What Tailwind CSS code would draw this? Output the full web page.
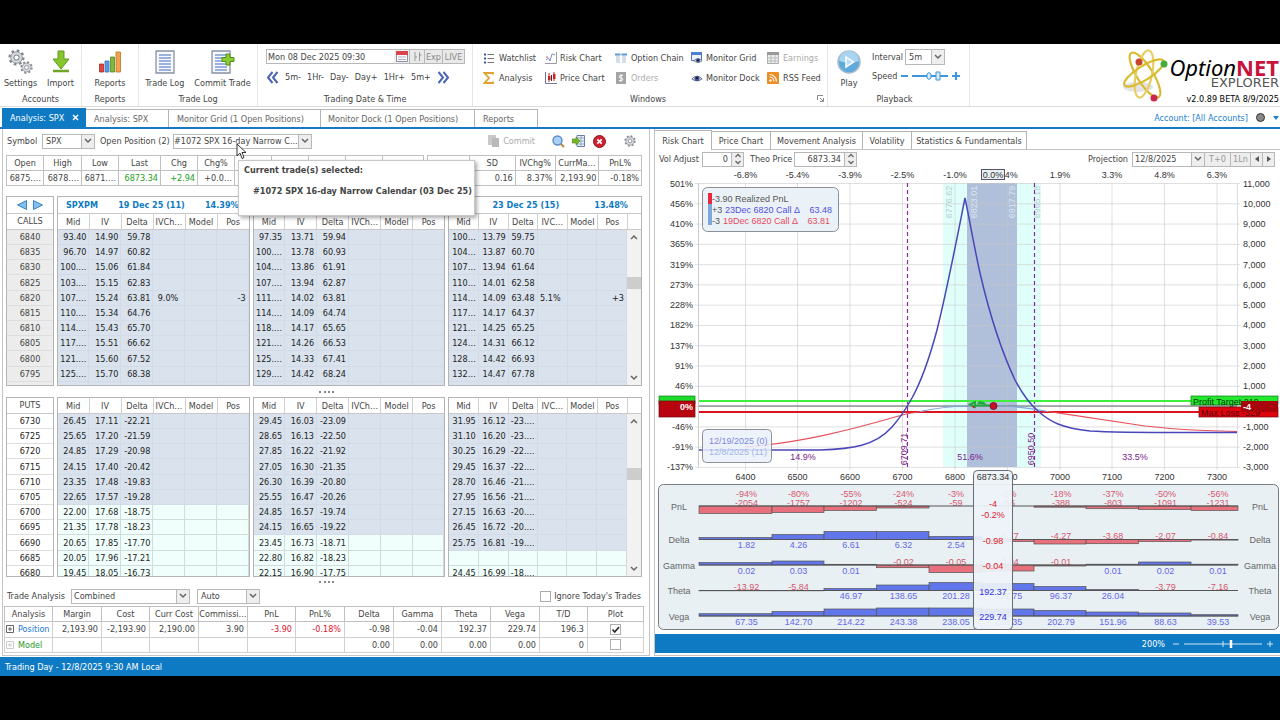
<!DOCTYPE html>
<html lang="en">
<head>
  <meta charset="utf-8"/>
  <meta content="width=device-width, initial-scale=1" name="viewport"/>
  <title>OptionNET Explorer</title>
  <script src="https://cdn.jsdelivr.net/npm/@tailwindcss/browser@4"></script>
</head>
<body class="bg-black h-screen overflow-hidden flex flex-col pt-[44px] pb-[44px] font-['DejaVu_Sans_Condensed','DejaVu_Sans',sans-serif] text-[9px] leading-[12px] text-[#444]">

  <!-- Shared symbols -->
  <svg class="hidden">
    <symbol id="chev" viewBox="0 0 8 6"><path d="M1 1l3 3 3-3" fill="none" stroke="#666" stroke-width="1.5"/></symbol>
    <symbol id="spin" viewBox="0 0 8 12"><path d="M1.500 4l2.500-2.500L6.500 4M1.500 8L4 10.500 6.500 8" fill="none" stroke="#666" stroke-width="1.300"/></symbol>
    <symbol id="gear" viewBox="0 0 20 20">
      <circle cx="10" cy="10" r="8" fill="none" stroke="#85898f" stroke-width="3" stroke-dasharray="3.100 3.180"/>
      <circle cx="10" cy="10" r="6.800" fill="#d5d8dc" stroke="#85898f"/>
      <circle cx="10" cy="10" r="3" fill="#fff" stroke="#85898f" stroke-width="1.200"/>
    </symbol>
    <symbol id="doc" viewBox="0 0 20 24">
      <path d="M1 1h18v22H1z" fill="#f7f9fd" stroke="#8791a3" stroke-width="1.300"/>
      <path d="M4 5h12M4 8h12M4 11h12M4 14h12M4 17h12M4 20h12" stroke="#7d9bd4" stroke-width="1.500"/>
    </symbol>
    <symbol id="eye" viewBox="0 0 14 10">
      <path d="M1 5.500Q7-1 13 5.500Q7 10 1 5.500z" fill="#dfe3ec" stroke="#555d75"/>
      <circle cx="7" cy="5" r="3" fill="#3f5596"/><circle cx="7" cy="4.500" r="1.200" fill="#111"/>
    </symbol>
    <radialGradient id="nucleus" cx=".4" cy=".3" r=".7"><stop offset="0" stop-color="#a9c8ee"/><stop offset="1" stop-color="#2f62ab"/></radialGradient>
  </svg>

  <div class="flex-1 min-h-0 bg-white flex flex-col relative">

    <!-- Ribbon -->
    <header class="h-[63px] shrink-0 flex border-b border-[#dcdcdc]">
      <section class="w-[82px] flex flex-col items-center border-r border-[#e6e6e6]">
        <div class="h-[49px] flex gap-2 pt-[5px]">
          <button class="flex flex-col items-center w-[32px] whitespace-nowrap">
            <svg class="w-[26px] h-[26px]" viewBox="0 0 26 26"><use href="#gear" x="0" y="0" width="17" height="17"/><use href="#gear" x="12" y="12" width="13" height="13"/></svg>
            <span class="mt-[2px]">Settings</span>
          </button>
          <button class="flex flex-col items-center w-[32px] whitespace-nowrap">
            <svg class="w-[20px] h-[26px]" viewBox="0 0 20 26"><path d="M7 2h6v8h5l-8 10-8-10h5z" fill="#86c52b" stroke="#5f9a1b"/><path d="M2 22h16" stroke="#6fa526" stroke-width="2.500"/></svg>
            <span class="mt-[2px]">Import</span>
          </button>
        </div>
        <span>Accounts</span>
      </section>
      <section class="w-[57px] flex flex-col items-center border-r border-[#e6e6e6]">
        <div class="h-[49px] pt-[5px]">
          <button class="flex flex-col items-center">
            <svg class="w-[24px] h-[26px]" viewBox="0 0 24 26"><g stroke-width=".8"><path d="M1.500 15h4v8h-4z" fill="#e4453b" stroke="#a52c25"/><path d="M7 12h4v11H7z" fill="#5f9be0" stroke="#3b6fae"/><path d="M12.500 8h4v15h-4z" fill="#7cba3c" stroke="#52862a"/><path d="M18 3h4.500v20H18z" fill="#f3a24b" stroke="#bb7222"/></g></svg>
            <span class="mt-[2px]">Reports</span>
          </button>
        </div>
        <span>Reports</span>
      </section>
      <section class="w-[119px] flex flex-col items-center border-r border-[#e6e6e6]">
        <div class="h-[49px] flex gap-[10px] pt-[5px]">
          <button class="flex flex-col items-center">
            <svg class="w-[20px] h-[26px]"><use href="#doc" y="1" width="20" height="24"/></svg>
            <span class="mt-[2px]">Trade Log</span>
          </button>
          <button class="flex flex-col items-center">
            <svg class="w-[26px] h-[26px]" viewBox="0 0 26 26"><use href="#doc" x="1" y="1" width="20" height="24"/><path d="M16 5h4v3.500h4v4h-4V16h-4v-3.500h-4v-4h4z" fill="#8ccc33" stroke="#4f8f1c"/></svg>
            <span class="mt-[2px]">Commit Trade</span>
          </button>
        </div>
        <span>Trade Log</span>
      </section>
      <section class="w-[215px] flex flex-col border-r border-[#e6e6e6] pl-2">
        <div class="h-[49px] pt-[5px]">
          <div class="flex w-[199px] h-[15px] border border-[#b8b8b8]">
            <input aria-label="Trading date" class="flex-1 min-w-0 pl-px" value="Mon 08 Dec 2025 09:30"/>
            <button aria-label="Calendar" class="w-[15px] flex items-center justify-center bg-[#eee]"><svg class="w-[12px] h-[11px]" viewBox="0 0 12 11"><path d="M.5.5h11v10H.5z" fill="#fff" stroke="#8a8fa8"/><path d="M0 0h12v4H0z" fill="#d9434b"/><path d="M2 6h8M2 8.500h8" stroke="#aab"/></svg></button>
            <button aria-label="Step" class="w-[15px] border-l border-[#b8b8b8] bg-[#e9e9e9] flex items-center justify-center"><svg class="w-[9px] h-[9px]" viewBox="0 0 9 9"><path d="M2 0v9M6.500 0v9M2 5h2M6.500 3h2" stroke="#999" fill="none"/></svg></button>
            <button class="w-[18px] border-l border-[#b8b8b8] bg-[#e9e9e9] text-[#888]">Exp</button>
            <button class="w-[22px] border-l border-[#b8b8b8] bg-[#e9e9e9] text-[#888]">LIVE</button>
          </div>
          <div class="flex items-center justify-between w-[184px] mt-[6px] h-[14px]">
            <button aria-label="Back"><svg class="w-[13px] h-[13px]" viewBox="0 0 13 13"><path d="M6.500 1L2 6.500 6.500 12M11.500 1L7 6.500l4.500 5.500" fill="none" stroke="#4a66b4" stroke-width="2"/></svg></button>
            <button>5m-</button><button>1Hr-</button><button>Day-</button><button>Day+</button><button>1Hr+</button><button>5m+</button>
            <button aria-label="Forward"><svg class="w-[13px] h-[13px]" viewBox="0 0 13 13"><path d="M1.500 1L6 6.500 1.500 12M6.500 1L11 6.500 6.500 12" fill="none" stroke="#4a66b4" stroke-width="2"/></svg></button>
          </div>
        </div>
        <span class="text-center pr-[8px]">Trading Date &amp; Time</span>
      </section>
      <section class="w-[355px] flex flex-col border-r border-[#e6e6e6] pl-[10px] relative">
        <div class="h-[49px] pt-[4px] grid grid-cols-[62px_70px_76px_76px_1fr] grid-rows-[20px_20px] whitespace-nowrap">
          <button class="flex items-center gap-1"><svg class="w-[12px] h-[11px]" viewBox="0 0 12 11"><path d="M1 1.500h2M1 5.500h2M1 9.500h2" stroke="#3a56a8" stroke-width="1.800"/><path d="M4.500 1.500H11M4.500 5.500H11M4.500 9.500H11" stroke="#777"/></svg>Watchlist</button>
          <button class="flex items-center gap-[3px]"><svg class="w-[12px] h-[12px]" viewBox="0 0 12 12"><path d="M11.500 0v11.500H0" fill="none" stroke="#99a"/><path d="M1 8l2.500-2L5 9l2-7 3 1" fill="none" stroke="#7a8fc4"/><path d="M1 5h2" stroke="#d55"/></svg>Risk Chart</button>
          <button class="flex items-center gap-1"><svg class="w-[12px] h-[11px]" viewBox="0 0 12 11"><path d="M0 1.500h5.500M6.500 1.500H12" stroke="#5c9bd8" stroke-width="2"/><path d="M2 2v8M4 2v8M8 2v8M10 2v8" stroke="#a8bdd4"/></svg>Option Chain</button>
          <button class="flex items-center gap-[3px]"><svg class="w-[12px] h-[12px]" viewBox="0 0 12 12"><path d="M.5.500h10v8H.5z" fill="#e9f0fb" stroke="#4d72bd"/><path d="M0 0h11v3H0z" fill="#4d7fd0"/><use href="#eye" x="2" y="5" width="10" height="7"/></svg>Monitor Grid</button>
          <button class="flex items-center gap-1 text-[#aaa]" disabled><svg class="w-[12px] h-[12px]" viewBox="0 0 12 12"><path d="M.5.500h11v11H.5z" fill="#eee" stroke="#aaa"/><path d="M0 0h12v3H0z" fill="#999"/><path d="M0 6h12M0 9h12M4 3v9M8 3v9" stroke="#bbb"/></svg>Earnings</button>
          <button class="flex items-center gap-1"><svg class="w-[12px] h-[12px]" viewBox="0 0 12 12"><path d="M10 2.500V1H1.500L6 6l-4.500 5H10V9.500" fill="none" stroke="#e2a02c" stroke-width="1.800"/></svg>Analysis</button>
          <button class="flex items-center gap-[3px]"><svg class="w-[12px] h-[12px]" viewBox="0 0 12 12"><path d="M.5 0v11.500H12" fill="none" stroke="#779"/><path d="M4 1v9M9 0v9" stroke="#c22"/><path d="M3 4h2.500v4H3z" fill="#c22"/><path d="M8 2h2.500v5H8z" fill="#c22"/><path d="M6.500 3v6" stroke="#334"/></svg>Price Chart</button>
          <button class="flex items-center gap-1 text-[#aaa]" disabled><svg class="w-[12px] h-[12px]" viewBox="0 0 12 12"><path d="M1 0h10v12H1z" fill="#a4a4a4"/><path d="M8 3.500H5.500a1.200 1.200 0 000 2.500h1a1.200 1.200 0 010 2.500H4M6 2v8" fill="none" stroke="#fff"/></svg>Orders</button>
          <button class="flex items-center gap-[3px]"><svg class="w-[12px] h-[9px]"><use href="#eye" width="12" height="9"/></svg>Monitor Dock</button>
          <button class="flex items-center gap-1"><svg class="w-[12px] h-[12px]" viewBox="0 0 12 12"><rect width="12" height="12" rx="1" fill="#ee8d22"/><circle cx="3.500" cy="8.500" r="1.200" fill="#fff"/><path d="M2.500 5a4.500 4.500 0 014.500 4.500M2.500 2.500a7 7 0 017 7" fill="none" stroke="#fff" stroke-width="1.200"/></svg>RSS Feed</button>
        </div>
        <span class="text-center pr-[14px]">Windows</span>
        <svg class="absolute right-[3px] bottom-[4px] w-[7px] h-[7px]" viewBox="0 0 7 7"><path d="M.5 5V.5H6M3 3l3 3M6.500 3v3.500H3" fill="none" stroke="#888"/></svg>
      </section>
      <section class="w-[142px] flex flex-col border-r border-[#e6e6e6] pl-[9px]">
        <div class="h-[49px] flex gap-[11px] pt-[5px]">
          <button class="flex flex-col items-center">
            <svg class="w-[24px] h-[26px]" viewBox="0 0 24 26"><circle cx="12" cy="13" r="11" fill="#5fa9dc" stroke="#a9bccb" stroke-width="1.500"/><path d="M2 12a10 10 0 0120 0q-10 3-20 0z" fill="#a9d5f2"/><path d="M9 8l7.500 5L9 18z" fill="#b8def8" stroke="#fff" stroke-width="1.500"/></svg>
            <span class="mt-[2px]">Play</span>
          </button>
          <div class="flex flex-col">
            <div class="flex items-center gap-[2px] h-[16px]">
              <label for="interval">Interval</label>
              <span class="flex w-[40px] h-[16px] border border-[#b8b8b8]"><select id="interval" class="appearance-none flex-1 min-w-0 pl-[3px]"><option>5m</option></select><span class="w-[13px] bg-[#eee] border-l border-[#b8b8b8] flex items-center justify-center"><svg class="w-[8px] h-[6px]"><use href="#chev"/></svg></span></span>
            </div>
            <div class="flex items-center gap-[3px] mt-[4px] h-[14px]">
              <span>Speed</span>
              <svg class="w-[60px] h-[12px]" viewBox="0 0 60 12"><path d="M1 6h7M12 6h36M52 6h8M56 2v8" stroke="#3d97dd" stroke-width="2"/><path d="M29 2.500l2 1.500v4l-2 1.500-2-1.500V4zM36 2h4v8h-4z" fill="#d8ecfb" stroke="#3d97dd"/></svg>
            </div>
          </div>
        </div>
        <span class="text-center pr-[17px]">Playback</span>
      </section>
      <div class="flex-1 flex justify-end">
        <svg class="w-[48px] h-[54px] mt-[4px]" viewBox="0 0 48 54">
          <ellipse cx="17" cy="39" rx="15" ry="5" fill="#e3e3e6"/>
          <g fill="none" stroke="#d9bb32" stroke-width="2.200">
            <ellipse cx="24" cy="27" rx="8" ry="26" transform="rotate(-32 24 27)"/>
            <ellipse cx="23" cy="26" rx="8" ry="24" transform="rotate(12 23 26)" stroke="#e6cf62"/>
            <ellipse cx="23" cy="25" rx="7" ry="23" transform="rotate(58 23 25)"/>
          </g>
          <circle cx="23" cy="27" r="8.500" fill="url(#nucleus)"/>
          <circle cx="18" cy="14" r="3.500" fill="#c8452c"/><circle cx="43" cy="16" r="3.500" fill="#45ad3d"/><circle cx="33" cy="50" r="3.500" fill="#c82850"/>
        </svg>
        <div class="flex flex-col items-end text-black pr-px">
          <div class="font-['Noto_Sans',sans-serif] text-[22px] leading-[26px] mt-[10px] whitespace-nowrap"><i>Option</i><b class="text-[#c8143c]">NET</b></div>
          <div class="font-['DejaVu_Sans',sans-serif] text-[13px] leading-[10px] -mt-[2px] text-[#555]">EXPLORER</div>
          <div class="mt-[5px] whitespace-nowrap">v2.0.89 BETA 8/9/2025</div>
        </div>
      </div>
    </header>

    <!-- Document tabs -->
    <nav class="h-[22px] shrink-0 flex items-end border-b-2 border-[#1779c0] pl-[2px] text-[#666] whitespace-nowrap">
      <a href="#" class="h-[19px] w-[84px] bg-[#0e7ac4] text-white flex items-center justify-between pl-2 pr-[7px]">Analysis: SPX <svg class="w-[7px] h-[7px]" viewBox="0 0 7 7"><path d="M1 1l5 5M6 1L1 6" stroke="#fff" stroke-width="1.500"/></svg></a>
      <a href="#" class="h-[18px] w-[83px] flex items-center pl-2 border-t border-r border-[#b4b4b4]">Analysis: SPX</a>
      <a href="#" class="h-[18px] w-[152px] flex items-center pl-2 border-t border-r border-[#b4b4b4]">Monitor Grid (1 Open Positions)</a>
      <a href="#" class="h-[18px] w-[154px] flex items-center pl-[7px] border-t border-r border-[#b4b4b4]">Monitor Dock (1 Open Positions)</a>
      <a href="#" class="h-[18px] w-[63px] flex items-center pl-2 border-t border-r border-[#b4b4b4]">Reports</a>
      <div class="ml-auto h-[19px] flex items-center gap-2 pr-px">
        <a href="#" class="text-[#1b7fd0]">Account: [All Accounts]</a>
        <svg class="w-[9px] h-[9px]" viewBox="0 0 9 9"><circle cx="4.500" cy="4.500" r="4" fill="#888" stroke="#333"/></svg>
        <svg class="w-[6px] h-[4px]" viewBox="0 0 6 4"><path d="M0 0h6L3 4z" fill="#1b7fd0"/></svg>
      </div>
    </nav>

    <main class="flex-1 min-h-0 grid grid-cols-[652fr_628fr]">

      <!-- Left side: option chain and trade analysis -->
      <section class="flex flex-col min-w-0 border-l border-r border-b border-[#c4c4c4] ml-[2px] mr-[2px] relative">
        <div class="h-[26px] pb-[2px] shrink-0 flex items-center pl-1 pr-[13px] whitespace-nowrap">
          <label for="symbol" class="w-[35px]">Symbol</label>
          <span class="flex w-[53px] h-[15px] border border-[#b8b8b8]"><select id="symbol" class="appearance-none flex-1 min-w-0 pl-[3px]"><option>SPX</option></select><span class="w-[13px] bg-[#eee] border-l border-[#b8b8b8] flex items-center justify-center"><svg class="w-[8px] h-[6px]"><use href="#chev"/></svg></span></span>
          <label for="position" class="ml-[5px] w-[73px]">Open Position (2)</label>
          <span class="flex w-[139px] h-[15px] border border-[#b8b8b8]"><select id="position" class="appearance-none flex-1 min-w-0"><option>#1072 SPX 16-day Narrow C...</option></select><span class="w-[13px] bg-[#eee] border-l border-[#b8b8b8] flex items-center justify-center"><svg class="w-[8px] h-[6px]"><use href="#chev"/></svg></span></span>
          <button class="ml-auto flex items-center gap-1 text-[#aaa]" disabled><svg class="w-[11px] h-[12px]" viewBox="0 0 11 12"><path d="M0 0h8v10H0z" fill="#c9c9c9"/><path d="M4 3h7v9H4z" fill="#b9b9b9"/></svg>Commit</button>
          <button aria-label="Find" class="ml-[17px]"><svg class="w-[13px] h-[13px]" viewBox="0 0 13 13"><path d="M8.500 8.500L12 12" stroke="#c98b3d" stroke-width="2.200"/><circle cx="5.500" cy="5.500" r="4.500" fill="#a9d1f5" stroke="#5b8fc9" stroke-width="1.400"/></svg></button>
          <button aria-label="Import positions" class="ml-[7px]"><svg class="w-[13px] h-[12px]" viewBox="0 0 13 12"><path d="M5 .5h7.500v11H5z" fill="#eef3fa" stroke="#6480a8"/><path d="M6 3h6M6 6h6M6 9h6M9 1v10" stroke="#8fa7c8"/><path d="M0 4h4V2l4 4-4 4V8H0z" fill="#76b82a" stroke="#4a8018" stroke-width=".6"/></svg></button>
          <button aria-label="Remove" class="ml-[8px]"><svg class="w-[13px] h-[13px]" viewBox="0 0 13 13"><circle cx="6.500" cy="6.500" r="6" fill="#cf2230" stroke="#8f1620"/><path d="M4.300 4.300l4.400 4.400M8.700 4.300L4.300 8.700" stroke="#fff" stroke-width="1.700"/></svg></button>
          <button aria-label="Options" class="ml-[18px]"><svg class="w-[12px] h-[12px]"><use href="#gear"/></svg></button>
        </div>

        <!-- Quotes -->
        <div class="flex gap-[3px] pl-[3px] pr-[7px] shrink-0">
          <table id="quotesA" class="table-fixed border-collapse w-[417px] h-[31px] whitespace-nowrap"></table>
          <table id="quotesB" class="table-fixed border-collapse flex-1 h-[31px] whitespace-nowrap"></table>
        </div>

        <!-- Chains -->
        <div id="calls" class="mt-[10px] h-[190px] shrink-0 grid grid-cols-[48px_193fr_193fr_194fr] gap-[3px] pl-[3px] pr-[7px]"></div>
        <div class="h-[11px] shrink-0 flex items-center justify-center"><span class="w-[15px] border-t-2 border-dotted border-[#888]"></span></div>
        <div id="puts" class="h-[180px] shrink-0 grid grid-cols-[48px_193fr_193fr_194fr] gap-[3px] pl-[3px] pr-[7px]"></div>
        <div class="h-[9px] shrink-0 flex items-center justify-center"><span class="w-[15px] border-t-2 border-dotted border-[#888]"></span></div>

        <!-- Trade analysis -->
        <div class="h-[20px] shrink-0 flex items-center pl-[4px] pr-[8px]">
          <label for="analysis" class="w-[64px]">Trade Analysis</label>
          <span class="flex w-[119px] h-[15px] border border-[#b8b8b8]"><select id="analysis" class="appearance-none flex-1 min-w-0 pl-[2px]"><option>Combined</option></select><span class="w-[13px] bg-[#eee] border-l border-[#b8b8b8] flex items-center justify-center"><svg class="w-[8px] h-[6px]"><use href="#chev"/></svg></span></span>
          <span class="ml-[7px] flex w-[63px] h-[15px] border border-[#b8b8b8]"><select aria-label="Mode" class="appearance-none flex-1 min-w-0 pl-[3px]"><option>Auto</option></select><span class="w-[13px] bg-[#eee] border-l border-[#b8b8b8] flex items-center justify-center"><svg class="w-[8px] h-[6px]"><use href="#chev"/></svg></span></span>
          <label class="ml-auto flex items-center gap-[3px]"><input type="checkbox" class="appearance-none w-[11px] h-[11px] border border-[#aaa]"/>Ignore Today's Trades</label>
        </div>
        <div class="pl-px pr-[6px]">
          <table id="trades" class="table-fixed border-collapse w-full h-[47px] whitespace-nowrap border border-[#b0b0b0]"></table>
        </div>

        <!-- Tooltip -->
        <div class="absolute left-[235px] top-[31px] w-[237px] h-[56px] bg-white border border-[#c8c8c8] shadow-[2px_2px_4px_#0005] font-bold text-[#444] pl-[5px] pt-[3px] whitespace-nowrap">
          <p>Current trade(s) selected:</p>
          <p class="mt-[9px] pl-[9px]">#1072 SPX 16-day Narrow Calendar (03 Dec 25)</p>
        </div>
        <svg class="absolute left-[233px] top-[14px] w-[11px] h-[17px]" viewBox="0 0 11 17"><path d="M1 1v12l3-3 2 5.500 2-1L6 9.500h4z" fill="#fff" stroke="#333"/></svg>
      </section>

      <!-- Right side: risk chart -->
      <section class="flex flex-col min-w-0 border-l border-[#c4c4c4] ml-[2px]">
        <nav class="h-[20px] mt-[1px] shrink-0 flex items-end border-b border-[#c4c4c4] whitespace-nowrap">
          <a href="#" class="h-[20px] -mb-px bg-white w-[57px] flex items-center justify-center border-t border-r border-[#b4b4b4]">Risk Chart</a>
          <a href="#" class="h-[18px] w-[59px] flex items-center justify-center border-t border-r border-[#b4b4b4]">Price Chart</a>
          <a href="#" class="h-[18px] w-[92px] flex items-center justify-center border-t border-r border-[#b4b4b4]">Movement Analysis</a>
          <a href="#" class="h-[18px] w-[49px] flex items-center justify-center border-t border-r border-[#b4b4b4]">Volatility</a>
          <a href="#" class="h-[18px] w-[115px] flex items-center justify-center border-t border-r border-[#b4b4b4]">Statistics &amp; Fundamentals</a>
        </nav>
        <div class="h-[18px] shrink-0 flex items-center pl-1 pr-[5px] whitespace-nowrap">
          <label for="vol" class="w-[43px]">Vol Adjust</label>
          <span class="flex w-[42px] h-[15px] border border-[#b8b8b8]"><input id="vol" class="flex-1 min-w-0 text-right pr-[3px]" value="0"/><span class="w-[12px] bg-[#eee] border-l border-[#b8b8b8] flex items-center justify-center"><svg class="w-[8px] h-[12px]"><use href="#spin"/></svg></span></span>
          <label for="theo" class="ml-[6px] w-[44px]">Theo Price</label>
          <span class="flex w-[63px] h-[15px] border border-[#b8b8b8]"><input id="theo" class="flex-1 min-w-0 text-right pr-[3px]" value="6873.34"/><span class="w-[12px] bg-[#eee] border-l border-[#b8b8b8] flex items-center justify-center"><svg class="w-[8px] h-[12px]"><use href="#spin"/></svg></span></span>
          <label for="proj" class="ml-auto pr-[4px]">Projection</label>
          <span class="flex w-[143px] h-[15px] border border-[#b8b8b8] text-[#999]">
            <select id="proj" class="appearance-none flex-1 min-w-0 pl-[2px] text-[#444]"><option>12/8/2025</option></select>
            <span class="w-[13px] bg-[#eee] border-l border-[#b8b8b8] flex items-center justify-center"><svg class="w-[8px] h-[6px]"><use href="#chev"/></svg></span>
            <button class="w-[26px] bg-[#eee] border-l border-[#b8b8b8]">T+0</button>
            <button class="w-[20px] bg-[#eee] border-l border-[#b8b8b8]">1Ln</button>
            <button aria-label="Previous" class="w-[12px] bg-[#eee] border-l border-[#b8b8b8] flex items-center justify-center"><svg class="w-[4px] h-[6px]" viewBox="0 0 4 6"><path d="M4 0v6L0 3z" fill="#555"/></svg></button>
            <button aria-label="Next" class="w-[12px] bg-[#eee] border-l border-[#b8b8b8] flex items-center justify-center"><svg class="w-[4px] h-[6px]" viewBox="0 0 4 6"><path d="M0 0v6l4-3z" fill="#555"/></svg></button>
          </span>
        </div>

        <svg id="chart" class="flex-1 min-h-0 w-full font-['Liberation_Sans',Arial,sans-serif] text-[9px]" viewBox="655 168 625 466"></svg>

        <div class="h-[19px] shrink-0 bg-[#0e7ac4] text-white flex items-center justify-end gap-2 pr-[7px]">
          <span>200%</span>
          <svg class="w-[100px] h-[10px]" viewBox="0 0 100 10"><path d="M0 5h6M11 5h78M94 5h6M97 2v6M50 2v6" stroke="#cfe6f7"/><path d="M58 1v8" stroke="#fff" stroke-width="2.500"/></svg>
        </div>
        <div class="h-[3px] shrink-0 border-b border-[#c4c4c4]"></div>
      </section>
    </main>

    <footer class="h-[19px] mt-[2px] shrink-0 bg-[#0e7ac4] text-white flex items-center pl-[5px]">Trading Day - 12/8/2025 9:30 AM Local</footer>
  </div>

<script>
  // ---------- Tables ----------
  const cols = widths => '<colgroup>' + widths.map(w => `<col style="width:${w}px">`).join('') + '</colgroup>';

  function quotes(id, widths, head, vals, green) {
    document.getElementById(id).innerHTML = cols(widths) +
      '<tr>' + head.map(h => `<th class="font-normal border border-[#c0c0c0] overflow-hidden">${h}</th>`).join('') + '</tr>' +
      '<tr>' + vals.map((v, i) => `<td class="border border-[#c0c0c0] text-right pr-[2px] overflow-hidden ${green.includes(i) ? 'text-[#1ca01c]' : ''}">${v}</td>`).join('') + '</tr>';
  }
  quotes('quotesA', [37, 38, 37, 42, 37, 37, 37, 37, 37, 37, 41],
    ['Open', 'High', 'Low', 'Last', 'Chg', 'Chg%', '', '', '', '', ''],
    ['6875.…', '6878.…', '6871.…', '6873.34', '+2.94', '+0.0…', '', '', '', '', ''], [3, 4]);
  quotes('quotesB', [43, 47, 40, 44, 43],
    ['', 'SD', 'IVChg%', 'CurrMa…', 'PnL%'],
    ['', '0.16', '8.37%', '2,193.90', '-0.18%'], []);

  const callStrikes = [6840, 6835, 6830, 6825, 6820, 6815, 6810, 6805, 6800, 6795, 6790];
  const putStrikes = [6730, 6725, 6720, 6715, 6710, 6705, 6700, 6695, 6690, 6685, 6680];
  const calls = [
    ['93.40 14.90 59.78', '96.70 14.97 60.82', '100.… 15.06 61.84', '103.… 15.15 62.83', '107.… 15.24 63.81 9.0% . -3', '110.… 15.34 64.76', '114.… 15.43 65.70', '117.… 15.51 66.62', '121.… 15.60 67.52', '125.… 15.70 68.38', '128.… 15.79 69.24'],
    ['97.35 13.71 59.94', '100.… 13.78 60.93', '104.… 13.86 61.91', '107.… 13.94 62.87', '111.… 14.02 63.81', '114.… 14.09 64.74', '118.… 14.17 65.65', '121.… 14.26 66.53', '125.… 14.33 67.41', '129.… 14.42 68.24', '132.… 14.47 69.11'],
    ['100… 13.79 59.75', '104… 13.87 60.70', '107… 13.94 61.64', '110… 14.01 62.58', '114… 14.09 63.48 5.1% . +3', '117… 14.17 64.37', '121… 14.25 65.25', '124… 14.31 66.12', '128… 14.42 66.93', '132… 14.47 67.78', '135… 14.56 68.59']
  ];
  const puts = [
    ['26.45 17.11 -22.21', '25.65 17.20 -21.59', '24.85 17.29 -20.98', '24.15 17.40 -20.42', '23.35 17.48 -19.83', '22.65 17.57 -19.28', '22.00 17.68 -18.75', '21.35 17.78 -18.23', '20.65 17.85 -17.70', '20.05 17.96 -17.21', '19.45 18.05 -16.73'],
    ['29.45 16.03 -23.09', '28.65 16.13 -22.50', '27.85 16.22 -21.92', '27.05 16.30 -21.35', '26.30 16.39 -20.80', '25.55 16.47 -20.26', '24.85 16.57 -19.74', '24.15 16.65 -19.22', '23.45 16.73 -18.71', '22.80 16.82 -18.23', '22.15 16.90 -17.75'],
    ['31.95 16.12 -23.…', '31.10 16.20 -23.…', '30.25 16.29 -22.…', '29.45 16.37 -22.…', '28.70 16.46 -21.…', '27.95 16.56 -21.…', '27.15 16.63 -20.…', '26.45 16.72 -20.…', '25.75 16.81 -19.…', '', '24.45 16.99 -18.…']
  ];
  const wide = [31, 32, 32, 32, 32, 32];
  const narrow = [29, 30, 29, 30, 30, 30];

  const chevUp = '<svg class="w-[8px] h-[6px] rotate-180"><use href="#chev"/></svg>';
  const chevDown = '<svg class="w-[8px] h-[6px]"><use href="#chev"/></svg>';

  function chain(id, side, strikes, grids, shaded, titles, thumb) {
    const isCall = side === 'CALLS';
    const arrows = '<div class="h-[17px] shrink-0 flex items-center justify-center gap-[6px] border-b border-[#c8c8c8]"><button aria-label="Previous expiry"><svg class="w-[10px] h-[10px]" viewBox="0 0 10 10"><path d="M9.500.5v9L.5 5z" fill="#7fc0ee" stroke="#3a86c4"/></svg></button><button aria-label="Next expiry"><svg class="w-[10px] h-[10px]" viewBox="0 0 10 10"><path d="M.5.5v9l9-4.500z" fill="#7fc0ee" stroke="#3a86c4"/></svg></button></div>';
    let html = `<div class="border border-[#b4b4b4] flex flex-col overflow-hidden min-w-0">${isCall ? arrows : ''}
      <div class="h-[16px] shrink-0 border-b border-[#c8c8c8] text-center leading-[15px]">${side}</div>
      <div class="flex-1 min-h-0 overflow-hidden"><table class="w-full h-[167px] border-collapse ${isCall ? 'bg-[#ececec]' : 'text-[#222]'}">` +
      strikes.map(s => `<tr><td class="p-0 text-center border-b border-[#dedede]">${s}</td></tr>`).join('') + '</table></div></div>';
    grids.forEach((rows, g) => {
      const last = g === 2;
      const w = last ? narrow : wide;
      const head = ['Mid', 'IV', 'Delta', last ? 'IVC…' : 'IVCh…', 'Model', 'Pos'];
      html += '<div class="border border-[#b4b4b4] flex flex-col overflow-hidden min-w-0">';
      if (isCall) html += `<div class="h-[17px] shrink-0 flex items-center justify-between font-bold text-[#0e7ac4] border-b border-[#c8c8c8] pl-[8px] ${last ? 'pr-[13px]' : 'pr-[10px]'} whitespace-nowrap">${titles[g].map(t => `<span>${t}</span>`).join('')}</div>`;
      html += `<div class="h-[16px] shrink-0 border-b border-[#c8c8c8] ${last ? 'pr-[14px]' : ''}"><table class="table-fixed border-collapse w-full h-[15px]">${cols(w)}<tr>` +
        head.map(h => `<th class="p-0 font-normal border-r border-[#d0d0d0]">${h}</th>`).join('') + '</tr></table></div>';
      html += `<div class="flex-1 min-h-0 flex overflow-hidden"><table class="table-fixed border-collapse flex-1 h-[167px] text-[#222] whitespace-nowrap">${cols(w)}` +
        rows.map((r, i) => {
          const v = r.split(' ');
          const tone = i < shaded[g] ? 'bg-[#d9e2ed] border-[#d2dce8]' : 'bg-[#f0fffc] border-[#cfdcda]';
          return '<tr>' + w.map((_, c) => `<td class="p-0 border-b border-r ${tone} ${c === 3 ? 'pr-[6px]' : 'pr-[2px]'} text-right">${v[c] && v[c] !== '.' ? v[c] : '&nbsp;'}</td>`).join('') + '</tr>';
        }).join('') + '</table>';
      if (last) html += `<div class="w-[14px] bg-[#f2f2f2] flex flex-col items-center justify-between py-[4px] relative">${chevUp}<span class="absolute left-0 ${thumb} w-full h-[12px] bg-[#cdcdcd]"></span>${chevDown}</div>`;
      html += '</div></div>';
    });
    document.getElementById(id).innerHTML = html;
  }
  chain('calls', 'CALLS', callStrikes, calls, [11, 11, 11], [['SPXPM', '19 Dec 25 (11)', '14.39%'], ['', '22 Dec 25 (14)', ''], ['', '23 Dec 25 (15)', '13.48%']], 'top-[47px]');
  chain('puts', 'PUTS', putStrikes, puts, [6, 8, 9], [], 'top-[54px]');

  const tHead = ['Analysis', 'Margin', 'Cost', 'Curr Cost', 'Commissi…', 'PnL', 'PnL%', 'Delta', 'Gamma', 'Theta', 'Vega', 'T/D', 'Plot'];
  const tRows = [
    ['Position', '2,193.90', '-2,193.90', '2,190.00', '3.90', '-3.90', '-0.18%', '-0.98', '-0.04', '192.37', '229.74', '196.3'],
    ['Model', '', '', '', '', '', '', '0.00', '0.00', '0.00', '0.00', '0']
  ];
  document.getElementById('trades').innerHTML = cols([48, 49, 48, 49, 49, 48, 49, 49, 48, 49, 49, 48, 56]) +
    '<tr>' + tHead.map(h => `<th class="p-0 font-normal border border-[#c0c0c0]">${h}</th>`).join('') + '</tr>' +
    tRows.map((r, n) => '<tr>' + r.map((v, c) => {
      if (c === 0) return `<td class="p-0 pl-px border border-[#d0d0d0] ${n ? 'text-[#1f9a2a]' : 'text-[#1b78d8]'}"><span class="flex items-center gap-[4px]"><svg class="w-[8px] h-[8px]" viewBox="0 0 8 8"><path d="M.5.500h7v7h-7zM2 4h4M4 2v4" fill="none" stroke="${n ? '#ccc' : '#666'}"/></svg>${v}</span></td>`;
      return `<td class="p-0 pr-[3px] text-right border border-[#d0d0d0] ${c === 5 || c === 6 ? 'text-[#e01030]' : ''}">${v}</td>`;
    }).join('') + `<td class="p-0 border border-[#d0d0d0]"><span class="flex justify-center relative"><input type="checkbox" aria-label="Plot ${r[0]}" class="appearance-none w-[11px] h-[11px] border border-[#b0b0b0]" ${n ? '' : 'checked'}/>${n ? '' : '<svg class="absolute w-[11px] h-[11px]" viewBox="0 0 11 11"><path d="M2.500 5.500l2.200 2.500L9 3" fill="none" stroke="#222" stroke-width="1.600"/></svg>'}</span></td></tr>`).join('');

  // ---------- Risk chart ----------
  const out = [];
  const text = (x, y, s, fill = '#333', anchor = 'middle', extra = '') => out.push(`<text x="${x}" y="${y}" fill="${fill}" text-anchor="${anchor}" ${extra}>${s}</text>`);
  const line = (x1, y1, x2, y2, stroke, w = 1, extra = '') => out.push(`<line x1="${x1}" y1="${y1}" x2="${x2}" y2="${y2}" stroke="${stroke}" stroke-width="${w}" ${extra}/>`);
  const rect = (x, y, w, h, fill, extra = '') => out.push(`<rect x="${x}" y="${y}" width="${w}" height="${h}" fill="${fill}" ${extra}/>`);
  const path = (d, stroke, w) => out.push(`<path d="${d}" fill="none" stroke="${stroke}" stroke-width="${w}"/>`);

  const ticks = [745.5, 797.5, 850, 902.5, 955, 1007.5, 1060, 1112, 1164.5, 1217];
  const topPct = ['-6.8%', '-5.4%', '-3.9%', '-2.5%', '-1.0%', '0.4%', '1.9%', '3.3%', '4.8%', '6.3%'];

  // probability bands
  rect(943, 183, 98, 284, '#e0fffb');
  rect(967, 183, 50, 284, '#b1c0da');

  // grid and axes
  for (let i = 0; i < 15; i++) {
    const y = 183.5 + i * 20.28;
    line(695, y, 1240, y, '#c8c8c8', 1, 'opacity=".55"');
    const pct = [501, 456, 410, 365, 319, 273, 228, 182, 137, 91, 46, 0, -46, -91, -137][i];
    if (pct) text(693, y + 3, pct + '%', '#333', 'end');
    const v = 11000 - i * 1000;
    if (v) text(1243, y + 3, v.toLocaleString('en-US'), '#333', 'start');
  }
  line(698.5, 183, 698.5, 467, '#ccc');
  line(1237.5, 183, 1237.5, 467, '#ddd');
  ticks.forEach((x, i) => {
    line(x, 183, x, 470, '#c8c8c8', 1, 'opacity=".55"');
    text(x, 178, topPct[i]);
    text(x, 480, 6400 + i * 100);
  });
  rect(981.5, 169.5, 23, 10, '#e8f0f4', 'stroke="#556"');
  text(993, 178, '0.0%');

  const vtext = (x, y, s, fill) => text(x, y, s, fill, 'middle', `transform="rotate(-90 ${x} ${y})"`);
  vtext(952, 202, '6776.62', '#b4cfd2');
  vtext(977, 202, '6823.01', '#dde5f0');
  vtext(1015, 202, '6917.79', '#dde5f0');
  vtext(1040, 202, '6965.18', '#b4cfd2');

  line(907.5, 183, 907.5, 467, '#8a2a9a', 1.200, 'stroke-dasharray="4 3"');
  line(1034.5, 183, 1034.5, 467, '#8a2a9a', 1.200, 'stroke-dasharray="4 3"');
  vtext(907, 449, '6709.71', '#7a1a8a');
  vtext(1034, 449, '6950.50', '#7a1a8a');

  line(699, 401, 1237, 401, '#3cf03c', 2);
  line(699, 406, 1237, 406, '#666', 1.200);
  line(699, 412, 1237, 412, '#dc1420', 2);

  path('M745 447C800 443 850 430 895 417C905 414 915 412 925 411', '#e8505c', 1.200);
  path('M920 411.500C935 408.500 945 406.500 965 406H1005C1020 407 1035 409 1048 411.500', '#7fa8e0', 1.200);
  path('M1048 411.500C1080 416 1110 421 1145 426C1180 430 1210 431 1237 431.500', '#e8505c', 1.200);
  path('M699 450H820C852 449 875 446 892 427C899 419 907 407 912 398C922 380 930 356 937 330C947 290 957 238 965 198C970 222 974 246 980 273C989 312 1000 348 1015 380C1024 397 1031 405 1038 411C1050 422 1062 428 1090 431C1120 433 1160 432.500 1237 432.500', '#4a46b8', 1.500);

  // current price marker
  path('M970 404.500l5-2.500v5zM974 405.500h16', '#22a83a', 2);
  out.push('<path d="M977 404l2-3 5 1 3 3z" fill="#22a83a"/><circle cx="973.500" cy="407" r="1" fill="#c8102a"/><circle cx="993.500" cy="406" r="3.500" fill="#c8102a" stroke="#801020"/>');

  text(803, 460, '14.9%', '#7a1a8a');
  text(970, 460, '51.6%', '#7a1a8a');
  text(1135, 460, '33.5%', '#7a1a8a');

  // value flags on both axes
  rect(659, 396, 36, 8, '#1edc2a', 'stroke="#117a18" stroke-width=".7"');
  rect(659, 401, 36, 16, '#b8040e', 'stroke="#70040a" stroke-width=".7"');
  text(693, 410, '0%', '#fff', 'end', 'font-weight="bold"');
  rect(1191, 396, 87, 9, '#22e82e', 'stroke="#117a18" stroke-width=".7"');
  text(1193, 405, 'Profit Target 219', '#043a06', 'start');
  rect(1199, 407, 79, 10, '#e0040e', 'stroke="#70040a" stroke-width=".7"');
  text(1201, 415.500, 'Max Loss -329', '#5c0006', 'start');
  rect(1241, 401, 37, 11, '#a8040c');
  text(1243, 410, '-4', '#fff', 'start', 'font-weight="bold"');

  // legends
  rect(702.5, 187.500, 136, 44, '#e9f1f6', 'rx="5" stroke="#8a9096" fill-opacity=".93"');
  rect(708, 193, 4, 11, '#e8283c');
  rect(708, 204, 4, 21, '#7da8dc');
  text(712, 202, '-3.90 Realized PnL', '#555', 'start');
  text(712, 213, '+3', '#555', 'start');
  text(725, 213, '23Dec 6820 Call Δ', '#5050e0', 'start');
  text(832, 213, '63.48', '#5050e0', 'end');
  text(712, 224, '-3', '#555', 'start');
  text(723, 224, '19Dec 6820 Call Δ', '#e8485c', 'start');
  text(830, 224, '63.81', '#e8485c', 'end');
  rect(702.5, 429.500, 69, 33, '#e9f1fa', 'rx="4" stroke="#8a9096" fill-opacity=".85"');
  text(709, 444, '12/19/2025 (0)', '#7f86e0', 'start');
  text(709, 455, '12/8/2025 (11)', '#a3b4e6', 'start');

  // greeks panel
  rect(658.5, 484.500, 620, 145, '#e8f0f4', 'rx="5" stroke="#777c82"');
  const edges = [699, 772, 824, 876.5, 929, 981.5, 1034, 1086, 1138.5, 1191, 1238];
  const RED = '#e8707c', BLUE = '#6076ea';
  const greeks = [
    { name: 'PnL', y: 506, h: [-7.5, -6.5, -4.5, -2, 0, 0, -1.2, -2.7, -3.5, -4.5], v: ['-2054', '-1757', '-1202', '-524', '-59', '-56', '-388', '-803', '-1091', '-1231'] },
    { name: 'Delta', y: 539.500, h: [2, 5, 8, 8, 3, -2, -4.5, -4.2, -2, -.6], v: ['1.82', '4.26', '6.61', '6.32', '2.54', '-1.77', '-4.27', '-3.68', '-2.07', '-0.84'] },
    { name: 'Gamma', y: 565, h: [2.5, 4, .7, -2.7, -7.5, -6, -1, .8, 3, .8], v: ['0.02', '0.03', '0.01', '-0.02', '-0.05', '-0.04', '-0.01', '0.01', '0.02', '0.01'] },
    { name: 'Theta', y: 590.500, h: [-.3, -.3, 2, 5.5, 8, 7, 4, 1, 0, 0], v: ['-13.92', '-5.84', '46.97', '138.65', '201.28', '177.75', '96.37', '26.04', '-3.79', '-7.16'] },
    { name: 'Vega', y: 616, h: [2.3, 4.5, 7, 8, 8, 7, 5.5, 4, 3, 1.300], v: ['67.35', '142.70', '214.22', '243.38', '238.05', '232.35', '202.79', '151.96', '88.63', '39.53'] }
  ];
  const pnlPct = ['-94%', '-80%', '-55%', '-24%', '-3%', '-3%', '-18%', '-37%', '-50%', '-56%'];
  ticks.forEach((x, i) => text(x + 1, 497, pnlPct[i], '#d9566c'));
  greeks.forEach(g => {
    text(679, g.y + 3.500, g.name, '#666');
    text(1260, g.y + 3.500, g.name, '#666');
    g.v.forEach((v, i) => {
      const neg = v[0] === '-';
      text(ticks[i] + 1, neg ? g.y - .5 : g.y + 8.500, v, neg ? '#d9566c' : '#6468e6');
      const h = g.h[i];
      if (h) rect(edges[i], h < 0 ? g.y : g.y - h, edges[i + 1] - edges[i], Math.abs(h), h < 0 ? RED : BLUE, 'stroke="#555" stroke-width=".7"');
    });
    line(699, g.y, 1238, g.y, '#555');
  });

  // current price column
  rect(973.5, 470.500, 39, 159, '#edf3f8', 'rx="4" stroke="#666c74" fill-opacity=".93"');
  text(993, 480, '6873.34', '#333');
  text(993, 506.500, '-4', '#dc2030');
  text(993, 518, '-0.2%', '#dc2030');
  text(993, 544, '-0.98', '#dc2030');
  text(993, 569, '-0.04', '#dc2030');
  text(993, 594.500, '192.37', '#3030dc');
  text(993, 620, '229.74', '#3030dc');

  document.getElementById('chart').innerHTML = out.join('');
</script>

</body>
</html>
